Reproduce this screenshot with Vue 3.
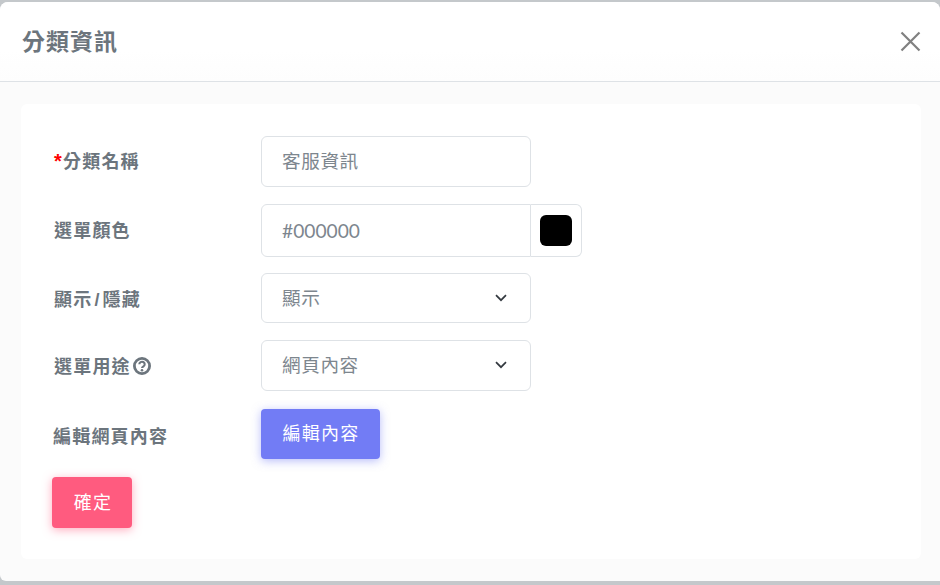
<template>
  <div class="page">
    <div class="modal">
      <header class="modal-header">
        <h2>分類資訊</h2>
        <button class="close-button" aria-label="close">
          <svg width="22" height="22" viewBox="0 0 22 22">
            <path d="M2.5 2.5L20.5 20.5M20.5 2.5L2.5 20.5" stroke="#808080" stroke-width="2.2" fill="none" />
          </svg>
        </button>
      </header>
      <div class="modal-body">
        <form class="card" @submit.prevent>
          <div class="row row-name">
            <label><span class="star">*</span>分類名稱</label>
            <input class="field" type="text" value="客服資訊" />
          </div>
          <div class="row row-color">
            <label>選單顏色</label>
            <div class="color-group">
              <input class="field color-text" type="text" value="#000000" />
              <div class="color-cell"><span class="swatch"></span></div>
            </div>
          </div>
          <div class="row row-visible">
            <label>顯示<span class="slash">/</span>隱藏</label>
            <div class="field select">
              <span>顯示</span>
              <svg class="chevron" width="12" height="8" viewBox="0 0 12 8">
                <path d="M1 1.2L6 6.2L11 1.2" stroke="#343a40" stroke-width="1.7" fill="none" />
              </svg>
            </div>
          </div>
          <div class="row row-usage">
            <label class="help-label">
              選單用途
              <svg class="help" width="18" height="18" viewBox="0 0 18 18">
                <circle cx="9" cy="9" r="7.6" fill="none" stroke="#6c757d" stroke-width="2.8" />
                <path d="M6.3 7.2a2.7 2.5 0 1 1 4.2 2.1c-.9.6-1.5 1-1.5 1.7" fill="none" stroke="#6c757d" stroke-width="2.1" />
                <circle cx="9" cy="13.3" r="1.3" fill="#6c757d" />
              </svg>
            </label>
            <div class="field select">
              <span>網頁內容</span>
              <svg class="chevron" width="12" height="8" viewBox="0 0 12 8">
                <path d="M1 1.2L6 6.2L11 1.2" stroke="#343a40" stroke-width="1.7" fill="none" />
              </svg>
            </div>
          </div>
          <div class="row row-edit">
            <label>編輯網頁內容</label>
            <button class="btn btn-edit" type="button">編輯內容</button>
          </div>
          <button class="btn btn-confirm" type="submit">確定</button>
        </form>
      </div>
    </div>
  </div>
</template>

<script setup>
</script>

<style>
html, body {
  margin: 0;
  background: #c4c8cb;
  overflow: hidden;
}
</style>

<style scoped>
.page {
  height: 585px;
  padding-top: 2px;
  box-sizing: border-box;
  font-family: "Liberation Sans", "Noto Sans CJK TC", sans-serif;
}

.modal {
  height: 579px;
  border-radius: 8px 8px 0 6px;
  background: #fbfbfb;
  display: flex;
  flex-direction: column;
}

.modal-header {
  height: 80px;
  box-sizing: border-box;
  flex: none;
  display: flex;
  justify-content: space-between;
  align-items: center;
  padding: 0 19px 0 22px;
  background: linear-gradient(#fff 60%, #fdfdfd);
  border-bottom: 1px solid #dee2e6;
  border-radius: 8px 8px 0 0;
}

.modal-header h2 {
  margin: 0;
  padding-bottom: 4px;
  color: #6c757d;
  font-size: 23px;
  font-weight: 700;
  letter-spacing: 1px;
}

.close-button {
  background: none;
  border: none;
  padding: 0;
  margin-bottom: 1px;
  height: 22px;
  display: flex;
}

.modal-body {
  flex: 1;
  padding: 22px 19px 22px 21px;
  display: flex;
}

.card {
  flex: 1;
  background: #fff;
  border-radius: 6px;
  box-sizing: border-box;
  padding: 32px 32px 31px 31px;
}

.row {
  display: flex;
  align-items: center;
  margin-bottom: 17px;
}

.row label {
  width: 209px;
  padding: 0 0 4px 2px;
  box-sizing: border-box;
  flex: none;
  color: #6c757d;
  font-size: 18px;
  font-weight: 700;
  letter-spacing: 1.2px;
}

.help-label {
  display: flex;
  align-items: center;
}

.help {
  margin: 2px 0 0 2px;
}

.star {
  color: #ff0000;
  font-size: 20px;
  line-height: 1;
  font-weight: 700;
}

.slash {
  margin: 0 2px;
}

.field {
  width: 270px;
  box-sizing: border-box;
  border: 1px solid #dee2e6;
  border-radius: 6px;
  background: #fff;
  padding: 0 20px 4px;
  color: #7d868e;
  font-family: inherit;
  font-size: 18.6px;
  font-weight: 400;
  letter-spacing: 0.6px;
  outline: none;
}

.row-name .field { height: 51px; }
.row-visible .field { height: 50px; }
.row-usage .field { height: 51px; }

.row-visible label {
  padding-bottom: 0;
}

.row-usage label {
  padding-bottom: 2px;
}

.row-color {
  margin-bottom: 16px;
}

.color-group {
  display: flex;
  height: 53px;
}

.color-group .color-text {
  height: 53px;
  padding-bottom: 0;
  border-radius: 6px 0 0 6px;
  font-family: Lato, sans-serif;
  font-size: 19.2px;
  letter-spacing: 0;
}

.color-cell {
  width: 51px;
  box-sizing: border-box;
  border: 1px solid #dee2e6;
  border-left: none;
  border-radius: 0 6px 6px 0;
  display: flex;
  align-items: center;
  justify-content: center;
}

.swatch {
  width: 32px;
  height: 31px;
  background: #000;
  border-radius: 6px;
}

.select {
  display: flex;
  align-items: center;
  justify-content: space-between;
}

.select .chevron {
  margin: 3px 3px 0 0;
}

.row-usage {
  margin-bottom: 18px;
}

.row-edit {
  margin-bottom: 18px;
}

.row-edit label {
  margin-top: 6px;
  padding-left: 1px;
}

.btn {
  border: none;
  border-radius: 4px;
  color: #fff;
  font-family: inherit;
  font-size: 18px;
  letter-spacing: 1.2px;
  padding: 0 0 4px 2px;
}

.btn-edit {
  width: 119px;
  height: 50px;
  padding-left: 1px;
  background: #727cf5;
  box-shadow: 0 2px 10px 0 rgba(114, 124, 245, 0.5);
}

.btn-confirm {
  width: 80px;
  height: 51px;
  background: #ff5b7f;
  box-shadow: 0 2px 10px 0 rgba(255, 91, 127, 0.5);
}
</style>
